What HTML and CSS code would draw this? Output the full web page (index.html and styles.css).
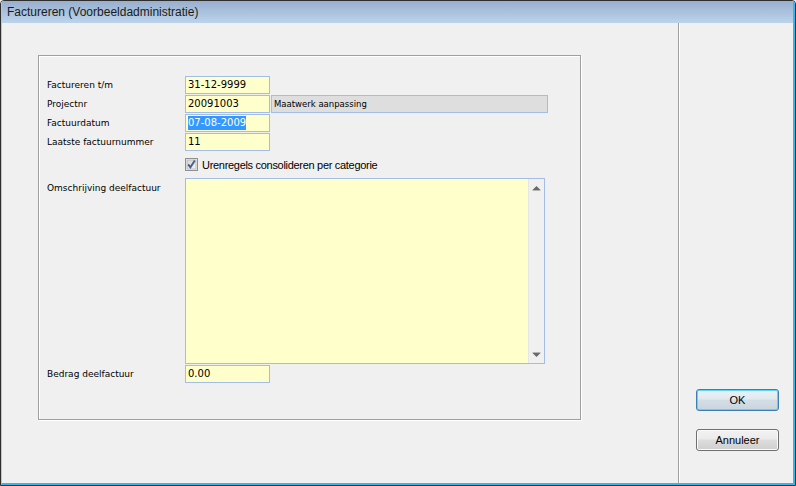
FILE: index.html
```html
<!DOCTYPE html>
<html>
<head>
<meta charset="utf-8">
<link rel="stylesheet" href="styles.css">
</head>
<body>
<div class="window">
  <div class="frame">
    <div class="titlebar">Factureren (Voorbeeldadministratie)</div>
    <div class="client">
      <div class="main">
        <div class="group">
          <div class="form">
            <div class="lbl">Factureren t/m</div>
            <div class="cell"><div class="fld">31-12-9999</div></div>

            <div class="lbl">Projectnr</div>
            <div class="cell"><div class="fld">20091003</div><div class="fld ro">Maatwerk aanpassing</div></div>

            <div class="lbl">Factuurdatum</div>
            <div class="cell"><div class="fld"><span class="sel">07-08-2009</span></div></div>

            <div class="lbl">Laatste factuurnummer</div>
            <div class="cell"><div class="fld">11</div></div>

            <div class="lbl"></div>
            <div class="cell chkrow">
              <svg class="chk" width="13" height="13" viewBox="0 0 13 13">
                <defs>
                  <linearGradient id="cg" x1="0" y1="0" x2="1" y2="1">
                    <stop offset="0" stop-color="#d4d4d4"/>
                    <stop offset="1" stop-color="#f6f6f6"/>
                  </linearGradient>
                </defs>
                <rect x="0.5" y="0.5" width="12" height="12" fill="#f4f4f4" stroke="#8e8f8f"/>
                <rect x="2" y="2" width="9" height="9" fill="url(#cg)" stroke="#bcbcbc" stroke-width="1"/>
                <path d="M3.2 6.4 L5.4 9.3 L9.8 2.6" fill="none" stroke="#4a5e8c" stroke-width="1.9"/>
              </svg>
              <span class="chklbl">Urenregels consolideren per categorie</span>
            </div>

            <div class="lbl top">Omschrijving deelfactuur</div>
            <div class="cell">
              <div class="memo">
                <div class="memo-text"></div>
                <div class="vscroll">
                  <svg width="16" height="8" viewBox="0 0 16 8" class="arr up"><polygon points="4.5,6 8.5,2 12.5,6" fill="#6a6a6a"/><line x1="4.5" y1="6.5" x2="12.5" y2="6.5" stroke="#b5b5b5"/></svg>
                  <svg width="16" height="8" viewBox="0 0 16 8" class="arr down"><polygon points="4.5,2 8.5,6 12.5,2" fill="#6a6a6a"/><line x1="4.5" y1="1.5" x2="12.5" y2="1.5" stroke="#b5b5b5"/></svg>
                </div>
              </div>
            </div>

            <div class="lbl">Bedrag deelfactuur</div>
            <div class="cell"><div class="fld">0.00</div></div>
          </div>
        </div>
      </div>
      <div class="side">
        <button class="btn default">OK</button>
        <button class="btn">Annuleer</button>
      </div>
    </div>
  </div>
</div>
</body>
</html>
```
FILE: styles.css
```css
html, body {
  margin: 0;
  padding: 0;
  background: #f0f0f0;
}
.window {
  width: 796px;
  height: 486px;
  box-sizing: border-box;
  border: 1px solid #2e2e2e;
  border-radius: 4px 4px 0 0;
  overflow: hidden;
}
.frame {
  height: 100%;
  box-sizing: border-box;
  border-left: 1px solid #aec7e2;
  border-right: 2px solid #3ab5e4;
  border-bottom: 2px solid #3ab5e4;
  display: flex;
  flex-direction: column;
}
.titlebar {
  height: 22px;
  line-height: 22px;
  padding-left: 5px;
  font-family: "Liberation Sans", Arial, sans-serif;
  font-size: 12px;
  color: #1b1b1b;
  background: linear-gradient(#98b0ce, #bbd3eb);
}
.client {
  flex: 1;
  display: flex;
  background: #f0f0f0;
}
.main {
  width: 676px;
  border-right: 1px solid #a0a0a0;
}
.group {
  margin: 32px 0 0 36px;
  width: 543px;
  height: 365px;
  box-sizing: border-box;
  border: 1px solid #a0a0a0;
  box-shadow: inset 1px 1px 0 #ffffff, 1px 1px 0 #ffffff;
  padding: 20px 0 0 8px;
}
.form {
  display: grid;
  grid-template-columns: 138px 1fr;
  grid-template-rows: 18px 18px 18px 18px 25px 186px 18px;
  row-gap: 1px;
}
.lbl {
  font-family: "DejaVu Sans", sans-serif;
  font-size: 9px;
  line-height: 18px;
  color: #000;
  white-space: nowrap;
}
.lbl.top {
  padding-top: 1px;
}
.cell {
  display: flex;
  gap: 1px;
}
.fld {
  width: 85px;
  height: 18px;
  box-sizing: border-box;
  border: 1px solid #a3bde6;
  background: #ffffcc;
  padding-left: 2px;
  font-family: "DejaVu Sans", sans-serif;
  font-size: 10px;
  line-height: 16px;
  color: #000;
  white-space: nowrap;
}
.fld.ro {
  width: 277px;
  background: #dedede;
  font-size: 8.5px;
}
.sel {
  display: inline-block;
  background: #3399ff;
  color: #ffffff;
  line-height: 14px;
  margin-top: 1px;
  vertical-align: top;
}
.chkrow {
  align-items: center;
  gap: 4px;
}
.chk {
  display: block;
}
.chklbl {
  font-family: "Liberation Sans", Arial, sans-serif;
  font-size: 11px;
  letter-spacing: -0.3px;
  color: #000;
}
.memo {
  width: 360px;
  height: 186px;
  box-sizing: border-box;
  border: 1px solid #a3bde6;
  display: flex;
}
.memo-text {
  flex: 1;
  background: #ffffcc;
}
.vscroll {
  width: 16px;
  background: #f0f0f0;
  border-left: 1px solid #e6e6e6;
  box-sizing: border-box;
  display: flex;
  flex-direction: column;
  justify-content: space-between;
  padding: 5px 0 4px;
}
.arr {
  display: block;
  margin-left: -1px;
}
.side {
  flex: 1;
  border-left: 1px solid #ffffff;
  padding: 366px 0 0 16px;
  display: flex;
  flex-direction: column;
  gap: 18px;
}
.btn {
  width: 83px;
  height: 22px;
  box-sizing: border-box;
  border: 1px solid #707070;
  border-radius: 3px;
  background: linear-gradient(#f2f2f2 0%, #ebebeb 45%, #dddddd 50%, #cfcfcf 100%);
  box-shadow: inset 0 0 0 1px #fbfbfb;
  font-family: "Liberation Sans", Arial, sans-serif;
  font-size: 11px;
  color: #000;
  padding: 0;
  margin: 0;
}
.btn.default {
  border-color: #3c7fb1;
  box-shadow: inset 0 0 0 1px #5fd2f7;
  background: linear-gradient(#eaf1f6 0%, #e2eaf0 45%, #d4dee6 50%, #c8d4de 100%);
}
```
